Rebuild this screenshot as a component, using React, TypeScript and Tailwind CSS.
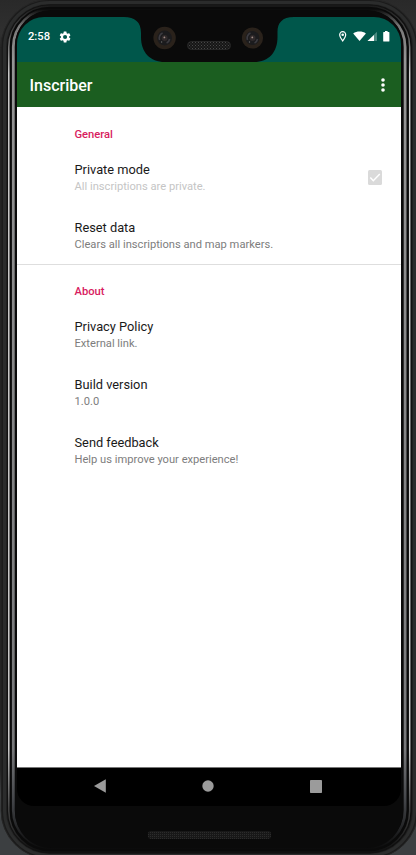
import React from "react";

function DeviceFrame() {
  return (
    <svg className="col-start-1 row-start-1" width="416" height="855" viewBox="0 0 416 855" fill="none">
      <defs>
        <linearGradient id="backdrop" x1="0" y1="0" x2="0" y2="1">
          <stop offset="0" stopColor="#292929" />
          <stop offset="0.04" stopColor="#303030" />
          <stop offset="0.06" stopColor="#222" />
          <stop offset="0.9" stopColor="#222" />
          <stop offset="0.93" stopColor="#55585b" />
          <stop offset="0.96" stopColor="#3c3f41" />
          <stop offset="1" stopColor="#3c3f41" />
        </linearGradient>
        <linearGradient id="chrome" gradientUnits="userSpaceOnUse" x1="0" y1="6" x2="0" y2="850">
          <stop offset="0" stopColor="#1c1c1c" />
          <stop offset="0.03" stopColor="#444" />
          <stop offset="0.08" stopColor="#d0d0d0" />
          <stop offset="0.88" stopColor="#d0d0d0" />
          <stop offset="0.95" stopColor="#444" />
          <stop offset="1" stopColor="#111" />
        </linearGradient>
        <linearGradient id="inner" gradientUnits="userSpaceOnUse" x1="0" y1="9" x2="0" y2="850">
          <stop offset="0" stopColor="#0a0a0a" />
          <stop offset="0.02" stopColor="#777" />
          <stop offset="0.06" stopColor="#959595" />
          <stop offset="0.88" stopColor="#77787a" />
          <stop offset="0.94" stopColor="#44464a" />
          <stop offset="1" stopColor="#0a0a0a" />
        </linearGradient>
        <pattern id="mesh" width="3" height="3" patternUnits="userSpaceOnUse">
          <rect width="3" height="3" fill="#161616" />
          <rect width="1" height="1" fill="#484848" />
          <rect x="1.5" y="1.5" width="1" height="1" fill="#3c3c3c" />
        </pattern>
        <pattern id="meshLow" width="2" height="2" patternUnits="userSpaceOnUse">
          <rect width="2" height="2" fill="#181818" />
          <rect width="1" height="1" fill="#2c2c2c" />
        </pattern>
      </defs>
      <rect width="416" height="855" fill="url(#backdrop)" />
      <rect x="1" y="-0.5" width="417" height="859" rx="48" fill="#1b1b1b" stroke="#262626" />
      <rect x="4.5" y="2.5" width="410" height="853" rx="45" fill="#1f1f1f" stroke="#2b2c2c" strokeWidth="3" />
      <rect x="7.5" y="5" width="404" height="848" rx="42" fill="#0a0a0a" stroke="#111" strokeWidth="1" />
      <rect x="8.8" y="6" width="400.9" height="846" rx="41" stroke="url(#chrome)" strokeWidth="1.5" />
      <rect x="13.3" y="9" width="391.8" height="839" rx="38" stroke="url(#inner)" strokeWidth="2.8" />
      <rect x="15" y="10" width="388" height="838" rx="36" fill="#0a0a0a" />
      <rect x="148" y="831" width="123" height="8" rx="3" fill="url(#meshLow)" />
    </svg>
  );
}

function Camera({ x, y, r }: { x: number; y: number; r: number }) {
  return (
    <g>
      <circle cx={x} cy={y} r={r} fill="#2a221b" />
      <circle cx={x} cy={y} r={r * 0.66} fill="#1b1b1d" />
      <path d={`M${x - 5} ${y + 2}a5.5 5.5 0 0 1 3-7M${x + 5} ${y + 1}a5.5 5.5 0 0 1-3 4`} stroke="#3c3b40" strokeWidth="1.6" />
      <circle cx={x} cy={y} r="3" fill="#302a2b" />
      <circle cx={x - 0.2} cy={y - 0.6} r="0.9" fill="#a18d86" />
      <circle cx={x - 3} cy={y + 4} r="0.7" fill="#666" />
    </g>
  );
}

function Notch() {
  return (
    <svg className="absolute left-[103px] top-0" width="178" height="45" viewBox="120 17 178 45" fill="none">
      <path
        d="M124 17C135 17 141 22 141 33V37C141 52 150 62 165 62H254C269 62 277.5 52 277.5 37V32C277.5 23 282 17 294 17Z"
        fill="#0a0a0a"
      />
      <Camera x={164.6} y={38} r={11.2} />
      <Camera x={252.5} y={38} r={10.6} />
      <rect x="187.5" y="41.5" width="43" height="8" rx="4" fill="url(#mesh)" stroke="#262626" />
    </svg>
  );
}

function StatusBar() {
  return (
    <div className="relative flex h-[45px] shrink-0 items-start justify-between bg-[#00574b] pl-[11px] pr-[10px] pt-[12px] text-white">
      <Notch />
      <div className="flex h-4 items-center gap-2">
        <span className="text-[11.2px] font-medium leading-4">2:58</span>
        <svg className="-mt-px" width="13" height="12" viewBox="0.5 1.5 21 21" fill="currentColor">
          <path d="M19.14 12.94c.04-.3.06-.61.06-.94 0-.32-.02-.64-.07-.94l2.03-1.58a.49.49 0 0 0 .12-.61l-1.92-3.32a.49.49 0 0 0-.59-.22l-2.39.96a7 7 0 0 0-1.62-.94l-.36-2.54a.48.48 0 0 0-.48-.41h-3.84a.48.48 0 0 0-.47.41l-.36 2.54c-.59.24-1.13.57-1.62.94l-2.39-.96a.48.48 0 0 0-.59.22L2.74 8.87a.48.48 0 0 0 .12.61l2.03 1.58a7.6 7.6 0 0 0 0 1.88l-2.03 1.58a.49.49 0 0 0-.12.61l1.92 3.32c.12.22.37.29.59.22l2.39-.96c.5.38 1.03.7 1.62.94l.36 2.54c.05.24.24.41.48.41h3.84c.24 0 .44-.17.47-.41l.36-2.54a7 7 0 0 0 1.62-.94l2.39.96c.22.08.47 0 .59-.22l1.92-3.32a.48.48 0 0 0-.12-.61ZM12 15.6A3.6 3.6 0 1 1 12 8.4a3.6 3.6 0 0 1 0 7.2Z" />
        </svg>
      </div>
      <svg className="mt-[2px]" width="52" height="11" viewBox="0 0 52 11" fill="none">
        <path d="M3.7 .7C1.9 .7.7 2 .7 3.7c0 2.2 3 6.2 3 6.2s3-4 3-6.2C6.7 2 5.5.7 3.7.7Z" stroke="white" strokeWidth="1.2" />
        <circle cx="3.7" cy="3.8" r="1.3" fill="white" />
        <path d="M14.2 2.4C17.7-.2 23.4-.2 26.9 2.4L20.5 10Z" fill="white" />
        <path d="M28.5 10L38 .8V10Z" fill="#4c8a81" />
        <path d="M28.5 10L35 4V10Z" fill="white" />
        <path d="M44.8 1h1.2V0h2.6v1h1.2q.6 0 .6.6v8.3q0 .6-.6.6h-5q-.6 0-.6-.6V1.6q0-.6.6-.6Z" fill="white" />
      </svg>
    </div>
  );
}

function AppBar() {
  return (
    <header className="flex h-[45px] shrink-0 items-center justify-between bg-[#1b5e20] pl-[12.5px] pr-4 text-white">
      <h1 className="pt-0.5 text-[16px] font-medium leading-5">Inscriber</h1>
      <svg width="4" height="14" viewBox="0 0 4 14" fill="currentColor">
        <circle cx="2" cy="2" r="1.8" />
        <circle cx="2" cy="7" r="1.8" />
        <circle cx="2" cy="12" r="1.8" />
      </svg>
    </header>
  );
}

function Category({ children }: { children: React.ReactNode }) {
  return <h2 className="pl-[57.5px] text-[11.2px] font-medium leading-4 text-[#d81b60]">{children}</h2>;
}

type PreferenceProps = { title: string; summary: string; disabled?: boolean; children?: React.ReactNode };

function Preference({ title, summary, disabled, children }: PreferenceProps) {
  return (
    <div className="flex h-[58px] items-center justify-between pl-[57.5px] pr-[19px]">
      <div className="pt-px">
        <div className="text-[12.8px] leading-[17px] text-[#1a1a1a]">{title}</div>
        <div className={`mt-px text-[11.15px] leading-4 ${disabled ? "text-[#c5c5c5]" : "text-[#7d7d7d]"}`}>{summary}</div>
      </div>
      {children}
    </div>
  );
}

function CheckedBox() {
  return (
    <svg width="14" height="15" viewBox="0 0 14 15" fill="none">
      <rect width="14" height="15" rx="1.5" fill="#dadada" />
      <path d="M2.3 7.5L5.3 10.7L11.8 4" stroke="white" strokeWidth="1.5" />
    </svg>
  );
}

function NavigationBar() {
  return (
    <nav className="flex h-[39px] shrink-0 items-center justify-between border-t border-[#777] bg-black pb-0.5 pl-[77px] pr-[79px]">
      <svg width="12" height="14" viewBox="0 0 12 14">
        <path d="M0 7L11.8 .3V13.7Z" fill="#9b9b9b" />
      </svg>
      <svg width="12" height="12" viewBox="0 0 12 12">
        <circle cx="6" cy="6" r="5.7" fill="#9b9b9b" />
      </svg>
      <svg width="12" height="13" viewBox="0 0 12 13">
        <rect width="12" height="13" rx=".7" fill="#9b9b9b" />
      </svg>
    </nav>
  );
}

export default function App() {
  return (
    <div className="grid h-[855px] w-[416px] overflow-hidden font-[Roboto,sans-serif]">
      <DeviceFrame />
      <div className="z-10 col-start-1 row-start-1 ml-[17px] mt-[17px] flex h-[789px] w-[384px] flex-col overflow-hidden rounded-t-[27px] rounded-b-[17px]">
        <StatusBar />
        <AppBar />
        <main className="grow bg-white">
          <section className="h-[158px] border-b border-[#dedede] pt-5">
            <Category>General</Category>
            <div className="pt-[5px]">
              <Preference title="Private mode" summary="All inscriptions are private." disabled>
                <CheckedBox />
              </Preference>
              <Preference title="Reset data" summary="Clears all inscriptions and map markers." />
            </div>
          </section>
          <section className="pt-[19px]">
            <Category>About</Category>
            <div className="pt-[5px]">
              <Preference title="Privacy Policy" summary="External link." />
              <Preference title="Build version" summary="1.0.0" />
              <Preference title="Send feedback" summary="Help us improve your experience!" />
            </div>
          </section>
        </main>
        <NavigationBar />
      </div>
    </div>
  );
}
